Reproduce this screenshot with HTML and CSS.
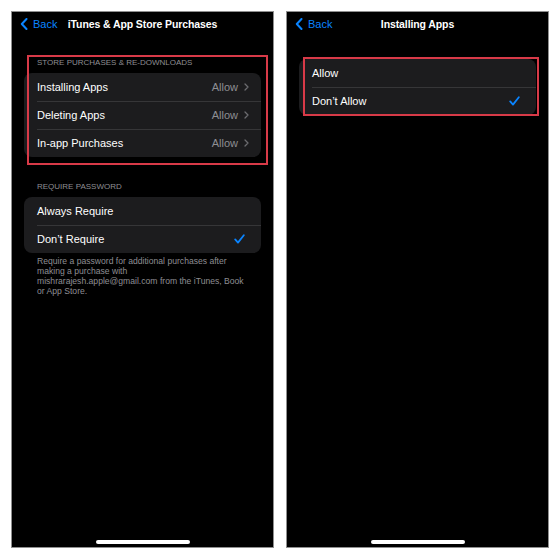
FILE: index.html
```html
<!DOCTYPE html>
<html lang="en">
  <head>
    <meta charset="UTF-8" />
    <title>iTunes &amp; App Store Purchases</title>
    <link rel="stylesheet" href="styles.css">
  </head>

  <body>
    <main class="screens">
      <section class="phone">
        <nav class="navbar">
          <a class="back">
            <svg width="8" height="12" viewBox="0 0 8 12"><path d="M6.5 1 L1.8 6 L6.5 11" fill="none" stroke="#0a84ff" stroke-width="2" stroke-linecap="round" stroke-linejoin="round"/></svg>
            Back
          </a>
          <h1>iTunes &amp; App Store Purchases</h1>
        </nav>

        <h2 class="group-title first">STORE PURCHASES &amp; RE-DOWNLOADS</h2>
        <ul class="group">
          <li class="row"><span>Installing Apps</span><span class="detail">Allow <svg width="5" height="8" viewBox="0 0 5 8"><path d="M1 1 L4 4 L1 7" fill="none" stroke="#6c6c70" stroke-width="1.3" stroke-linecap="round" stroke-linejoin="round"/></svg></span></li>
          <li class="row"><span>Deleting Apps</span><span class="detail">Allow <svg width="5" height="8" viewBox="0 0 5 8"><path d="M1 1 L4 4 L1 7" fill="none" stroke="#6c6c70" stroke-width="1.3" stroke-linecap="round" stroke-linejoin="round"/></svg></span></li>
          <li class="row"><span>In-app Purchases</span><span class="detail">Allow <svg width="5" height="8" viewBox="0 0 5 8"><path d="M1 1 L4 4 L1 7" fill="none" stroke="#6c6c70" stroke-width="1.3" stroke-linecap="round" stroke-linejoin="round"/></svg></span></li>
        </ul>

        <h2 class="group-title">REQUIRE PASSWORD</h2>
        <ul class="group">
          <li class="row"><span>Always Require</span></li>
          <li class="row"><span>Don’t Require</span><svg class="check" width="11" height="10" viewBox="0 0 11 10"><path d="M1.2 5.4 L4 8.6 L9.8 1.2" fill="none" stroke="#0a84ff" stroke-width="1.8" stroke-linecap="round" stroke-linejoin="round"/></svg></li>
        </ul>
        <p class="footnote">Require a password for additional purchases after making a purchase with mishrarajesh.apple@gmail.com from the iTunes, Book or App Store.</p>

        <div class="highlight left-box"></div>
        <div class="home"></div>
      </section>

      <section class="phone">
        <nav class="navbar">
          <a class="back">
            <svg width="8" height="12" viewBox="0 0 8 12"><path d="M6.5 1 L1.8 6 L6.5 11" fill="none" stroke="#0a84ff" stroke-width="2" stroke-linecap="round" stroke-linejoin="round"/></svg>
            Back
          </a>
          <h1>Installing Apps</h1>
        </nav>

        <ul class="group options">
          <li class="row"><span>Allow</span></li>
          <li class="row"><span>Don’t Allow</span><svg class="check" width="11" height="10" viewBox="0 0 11 10"><path d="M1.2 5.4 L4 8.6 L9.8 1.2" fill="none" stroke="#0a84ff" stroke-width="1.8" stroke-linecap="round" stroke-linejoin="round"/></svg></li>
        </ul>

        <div class="highlight right-box"></div>
        <div class="home"></div>
      </section>
    </main>
  </body>
</html>
```

FILE: styles.css
```css
body {
  margin: 0;
  background-color: #fff;
  font-family: "Liberation Sans", Arial, sans-serif;
}

.screens {
  display: flex;
  gap: 12px;
  padding: 11px;
}

.phone {
  position: relative;
  display: flex;
  flex-direction: column;
  box-sizing: border-box;
  width: 263px;
  height: 537px;
  border: 1px solid #8f8f8f;
  background-color: #000;
  color: #fff;
}

.navbar {
  display: grid;
  grid-template-columns: 1fr auto 1fr;
  align-items: center;
  height: 24px;
  padding: 0 8px;
}

.back {
  display: flex;
  align-items: center;
  gap: 5px;
  color: #0a84ff;
  font-size: 11px;
}

.navbar h1 {
  margin: 0;
  font-size: 10.5px;
  font-weight: bold;
  letter-spacing: -0.1px;
}

.group-title {
  margin: 24px 0 4px;
  padding-left: 25px;
  font-size: 8px;
  line-height: 12px;
  font-weight: normal;
  color: #8e8e93;
}

.group-title.first {
  margin-top: 21px;
}

.group {
  list-style: none;
  margin: 0 12px;
  padding: 0;
  background-color: #1c1c1e;
  border-radius: 8px;
}

.options {
  margin-top: 23px;
}

.row {
  position: relative;
  display: flex;
  justify-content: space-between;
  align-items: center;
  height: 28px;
  padding: 0 12px 0 13px;
  font-size: 11px;
}

.row + .row::before {
  content: "";
  position: absolute;
  left: 13px;
  right: 0;
  top: 0;
  border-top: 1px solid #363638;
}

.detail {
  display: flex;
  align-items: center;
  gap: 6px;
  color: #8e8e93;
}

.check {
  margin-right: 4px;
}

.footnote {
  margin: 3px 0 0;
  padding: 0 25px;
  font-size: 8.6px;
  line-height: 10px;
  color: #8e8e93;
}

.highlight {
  position: absolute;
  border: 2px solid #d83a48;
}

.left-box {
  left: 15px;
  top: 43px;
  width: 237px;
  height: 106px;
}

.right-box {
  left: 16px;
  top: 45px;
  width: 232px;
  height: 55px;
}

.home {
  align-self: center;
  width: 94px;
  height: 4px;
  margin: auto 0 3px;
  border-radius: 2px;
  background-color: #fff;
}
```
